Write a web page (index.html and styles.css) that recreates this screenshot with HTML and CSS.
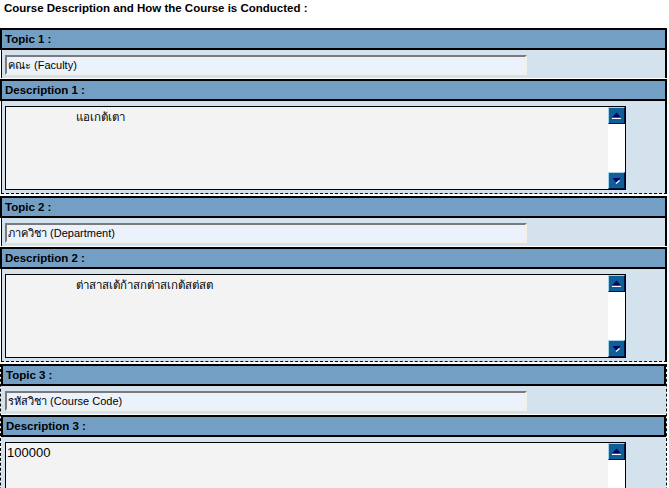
FILE: index.html
```html
<!DOCTYPE html>
<html lang="th">
<head>
<meta charset="utf-8">
<title>Course Description</title>
<link rel="stylesheet" href="styles.css">
</head>
<body>
<div class="title">Course Description and How the Course is Conducted :</div>

<div class="section">
  <div class="hdr">Topic 1 :</div>
  <div class="row row-in"><div class="field">คณะ (Faculty)</div></div>
  <div class="hdr">Description 1 :</div>
  <div class="row row-ta">
    <div class="ta">
      <div class="ta-text"><div class="indent">แอเกต้เตา</div></div>
      <div class="sb">
        <div class="btn"><svg width="15" height="15" viewBox="0 0 15 15"><polygon points="3.5,9 7.5,4.5 11.5,9" fill="#00006e"/><rect x="3" y="10" width="9" height="1" fill="#fff"/></svg></div>
        <div class="btn"><svg width="15" height="15" viewBox="0 0 15 15"><polygon points="3.5,5 11.5,5 7.5,10" fill="#00006e"/><polyline points="7,10.5 10.5,7.5" stroke="#fff" stroke-width="1.3" fill="none"/></svg></div>
      </div>
    </div>
  </div>
</div>

<div class="section">
  <div class="hdr">Topic 2 :</div>
  <div class="row row-in"><div class="field">ภาควิชา (Department)</div></div>
  <div class="hdr">Description 2 :</div>
  <div class="row row-ta">
    <div class="ta">
      <div class="ta-text"><div class="indent">ต่าสาสเต้ก้าสกต่าสเกต้สต่สต</div></div>
      <div class="sb">
        <div class="btn"><svg width="15" height="15" viewBox="0 0 15 15"><polygon points="3.5,9 7.5,4.5 11.5,9" fill="#00006e"/><rect x="3" y="10" width="9" height="1" fill="#fff"/></svg></div>
        <div class="btn"><svg width="15" height="15" viewBox="0 0 15 15"><polygon points="3.5,5 11.5,5 7.5,10" fill="#00006e"/><polyline points="7,10.5 10.5,7.5" stroke="#fff" stroke-width="1.3" fill="none"/></svg></div>
      </div>
    </div>
  </div>
</div>

<div class="section focus">
  <div class="hdr">Topic 3 :</div>
  <div class="row row-in"><div class="field">รหัสวิชา (Course Code)</div></div>
  <div class="hdr">Description 3 :</div>
  <div class="row row-ta">
    <div class="ta">
      <div class="ta-text">100000</div>
      <div class="sb">
        <div class="btn"><svg width="15" height="15" viewBox="0 0 15 15"><polygon points="3.5,9 7.5,4.5 11.5,9" fill="#00006e"/><rect x="3" y="10" width="9" height="1" fill="#fff"/></svg></div>
        <div class="btn"><svg width="15" height="15" viewBox="0 0 15 15"><polygon points="3.5,5 11.5,5 7.5,10" fill="#00006e"/><polyline points="7,10.5 10.5,7.5" stroke="#fff" stroke-width="1.3" fill="none"/></svg></div>
      </div>
    </div>
  </div>
</div>
</body>
</html>
```

FILE: styles.css
```css
html {
  overflow: hidden;
}
body {
  margin: 0;
  background: #ffffff;
  color: #000000;
  font-family: "Liberation Sans", Arial, "Noto Sans", sans-serif;
}
.title {
  font-weight: bold;
  font-size: 11.5px;
  line-height: 13px;
  padding: 2px 0 0 4px;
  height: 26px;
}
.section {
  width: 667px;
}
.hdr {
  box-sizing: border-box;
  height: 22px;
  border: 2px solid #000000;
  background: #739fc5;
  font-weight: bold;
  font-size: 11.5px;
  line-height: 18px;
  padding-left: 3px;
}
.row {
  box-sizing: border-box;
  margin-left: 1px;
  border-left: 1px solid #000000;
  border-right: 2px solid #000000;
  background: #d4e2ee;
  padding-left: 3px;
}
.row-in {
  height: 28px;
  padding-top: 5px;
  margin-bottom: 1px;
}
.row-ta {
  height: 93px;
  padding-top: 5px;
  border-bottom: 1px dashed #000000;
  margin-bottom: 2px;
}
.focus {
  width: 665px;
  border-left: 1px dashed #000000;
  border-right: 1px dashed #000000;
}
.focus .row {
  margin-left: 0;
  border-left: 0;
  border-right: 0;
  padding-left: 4px;
}
.focus .row-ta {
  border-bottom: 0;
}
.field {
  box-sizing: border-box;
  width: 522px;
  height: 20px;
  border-top: 2px solid #7a7a7a;
  border-left: 2px solid #7a7a7a;
  border-bottom: 2px solid #f4f1e5;
  border-right: 2px solid #f4f1e5;
  background: #ebf2fc;
  font-size: 11px;
  line-height: 16px;
  padding-left: 1px;
  white-space: nowrap;
  overflow: hidden;
}
.ta {
  box-sizing: border-box;
  width: 621px;
  height: 84px;
  border: 1px solid #000000;
  background: #f3f3f3;
  display: flex;
}
.ta-text {
  flex: 1;
  font-size: 13px;
  line-height: 16px;
  padding: 2px 2px 0 1px;
}
.indent {
  padding-left: 69px;
  font-size: 11.5px;
}
.sb {
  width: 17px;
  background: #ffffff;
  display: flex;
  flex-direction: column;
  justify-content: space-between;
}
.btn {
  box-sizing: border-box;
  width: 17px;
  height: 17px;
  border: 1px solid;
  border-color: #a9d2e6 #00163f #00163f #a9d2e6;
  background: #0e5f97;
}
.btn svg {
  display: block;
}
```
